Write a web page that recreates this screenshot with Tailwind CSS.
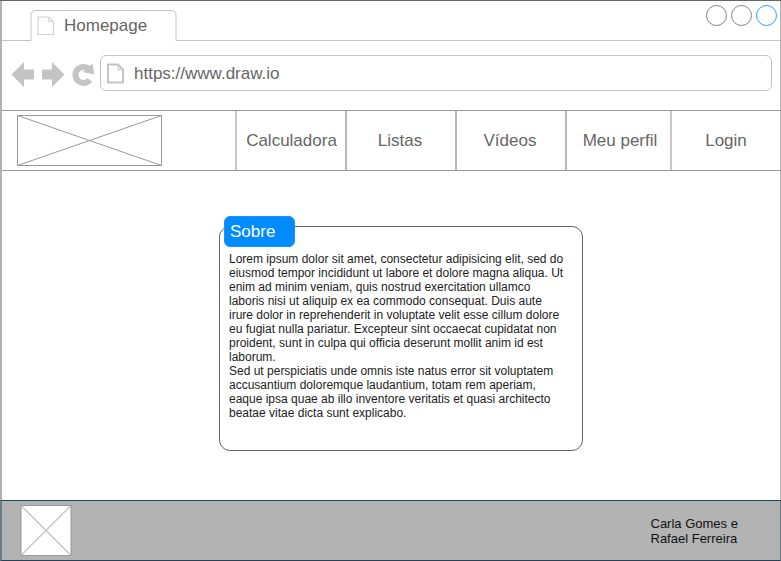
<!DOCTYPE html>
<html lang="pt">
<head>
<meta charset="utf-8">
<title>Homepage</title>
<script src="https://cdn.jsdelivr.net/npm/@tailwindcss/browser@4"></script>
</head>
<body class="bg-white">
<div class="w-[781px] h-[561px] overflow-hidden flex flex-col font-['Liberation_Sans',Arial,sans-serif] text-[17px] leading-5 text-[#666666]">
  <header class="h-[110px] shrink-0 flex flex-col border-t border-t-[#666666]">
    <div class="h-10 flex border-l-2 border-l-[#b3b3b3] border-r border-r-[#b3b3b3]">
      <div class="w-7 border-b border-[#c4c4c4]"></div>
      <div class="relative w-[148px] h-10 flex items-center">
        <svg class="absolute left-0 top-0" width="148" height="40" fill="none" stroke="#c4c4c4"><path d="M0 39.5H1V14.500Q1 9.500 6 9.500H141Q146 9.500 146 14.500V39.500H148"/></svg>
        <svg class="ml-[7px] mt-[10px]" width="18" height="20" fill="none" stroke="#d2d2d2" stroke-width="1.200"><path d="M1 1H11.500L16.500 6V18.500H1Z"/><path stroke-width=".9" d="M11.500 1V5.500H16.500"/></svg>
        <span class="ml-[9px] mt-[9px]">Homepage</span>
      </div>
      <div class="grow h-10 border-b border-[#c4c4c4] flex justify-end gap-1 pt-1 pr-[3px]">
        <svg width="21" height="21" fill="none" stroke="#808080"><circle cx="10.500" cy="10.500" r="10"/></svg>
        <svg width="21" height="21" fill="none" stroke="#808080"><circle cx="10.500" cy="10.500" r="10"/></svg>
        <svg width="21" height="21" fill="none" stroke="#3399ff"><circle cx="10.500" cy="10.500" r="10"/></svg>
      </div>
    </div>
    <div class="grow flex items-start border-l-2 border-l-[#b3b3b3] border-r border-r-[#b3b3b3] pt-[14px] pl-[9px] pr-2">
      <svg class="shrink-0 mr-[3px]" width="86" height="36" fill="#c4c4c4">
        <path d="M.5 19.500L13 7V14.500H23V24.500H13V32Z"/>
        <path d="M53.500 19.500L41 7V14.500H31V24.500H41V32Z"/>
        <path d="M77.500 13.700A8 8 0 1 0 78.800 24.900" fill="none" stroke="#c4c4c4" stroke-width="6"/>
        <path d="M81.500 8.500L83.200 19.500L71.500 17Z"/>
      </svg>
      <div class="grow h-9 flex items-center rounded-[6px] border border-[#c4c4c4] pl-[5px]">
        <svg width="18" height="21" fill="none" stroke="#c4c4c4" stroke-width="2"><path d="M2 1.500H12L17 6.500V19.500H2Z"/><path stroke-width="1" d="M12 1.500V6.500H17"/></svg>
        <span class="ml-[10px] mt-[2px]">https://www.draw.io</span>
      </div>
    </div>
  </header>
  <nav class="h-[61px] shrink-0 flex border-y border-[#999999] border-l-2 border-l-[#b3b3b3] border-r border-r-[#b3b3b3] text-center leading-[59px]">
    <div class="w-[233px] pl-[15px] pt-1">
      <svg width="145" height="51" fill="none" stroke="#999999"><path d="M.5 .5H144.500V50.500H.5ZM.5 .5L144.500 50.500M144.500 .5L.5 50.500"/></svg>
    </div>
    <div class="w-[110px] border-l-2 border-[#c8c8c8] pl-px">Calculadora</div>
    <div class="w-[110px] border-l-2 border-[#b8b8b8] pr-[2px]">Listas</div>
    <div class="w-[110px] border-l-2 border-[#b8b8b8] pr-[2px]">Vídeos</div>
    <div class="w-[105px] border-l-2 border-[#b8b8b8] pl-[3px]">Meu perfil</div>
    <div class="grow border-l-2 border-[#c8c8c8]">Login</div>
  </nav>
  <main class="h-[329px] shrink-0 border-l-2 border-l-[#b3b3b3] border-r border-r-[#b3b3b3] pt-[55px] pl-[217px]">
    <section class="relative w-[364px] h-[225px] rounded-[11px] border border-[#666666] pl-[9px] pt-[25px] text-xs leading-[14px] text-[#222222] whitespace-nowrap">
      <h2 class="absolute -top-[11px] left-1 w-[71px] h-[31px] rounded-[6px] bg-[#008cff] border border-[#1a94ff] pl-[5px] text-[17px] leading-[29px] text-white">Sobre</h2>
      <p>Lorem ipsum dolor sit amet, consectetur adipisicing elit, sed do<br>eiusmod tempor incididunt ut labore et dolore magna aliqua. Ut<br>enim ad minim veniam, quis nostrud exercitation ullamco<br>laboris nisi ut aliquip ex ea commodo consequat. Duis aute<br>irure dolor in reprehenderit in voluptate velit esse cillum dolore<br>eu fugiat nulla pariatur. Excepteur sint occaecat cupidatat non<br>proident, sunt in culpa qui officia deserunt mollit anim id est<br>laborum.</p>
      <p>Sed ut perspiciatis unde omnis iste natus error sit voluptatem<br>accusantium doloremque laudantium, totam rem aperiam,<br>eaque ipsa quae ab illo inventore veritatis et quasi architecto<br>beatae vitae dicta sunt explicabo.</p>
    </section>
  </main>
  <footer class="h-[61px] shrink-0 flex justify-between bg-[#b3b3b3] border-y border-[#23445d] border-l-2 border-l-[#6b7c89] border-r border-r-[#6b7c89] pl-[18px] pt-1">
    <svg width="52" height="51" fill="none"><path fill="#fff" d="M1 0H51V51H1Z"/><path stroke="#c4c4c4" stroke-width="1.300" d="M1 .5L51 50.500M51 .5L1 50.500"/><path stroke="#999999" d="M1 .5H51V50.500H1Z"/></svg>
    <p class="w-[130px] pl-[0.5px] pt-[11px] text-[13px] leading-[15px] text-[#111111]">Carla Gomes e<br>Rafael Ferreira</p>
  </footer>
</div>
</body>
</html>
